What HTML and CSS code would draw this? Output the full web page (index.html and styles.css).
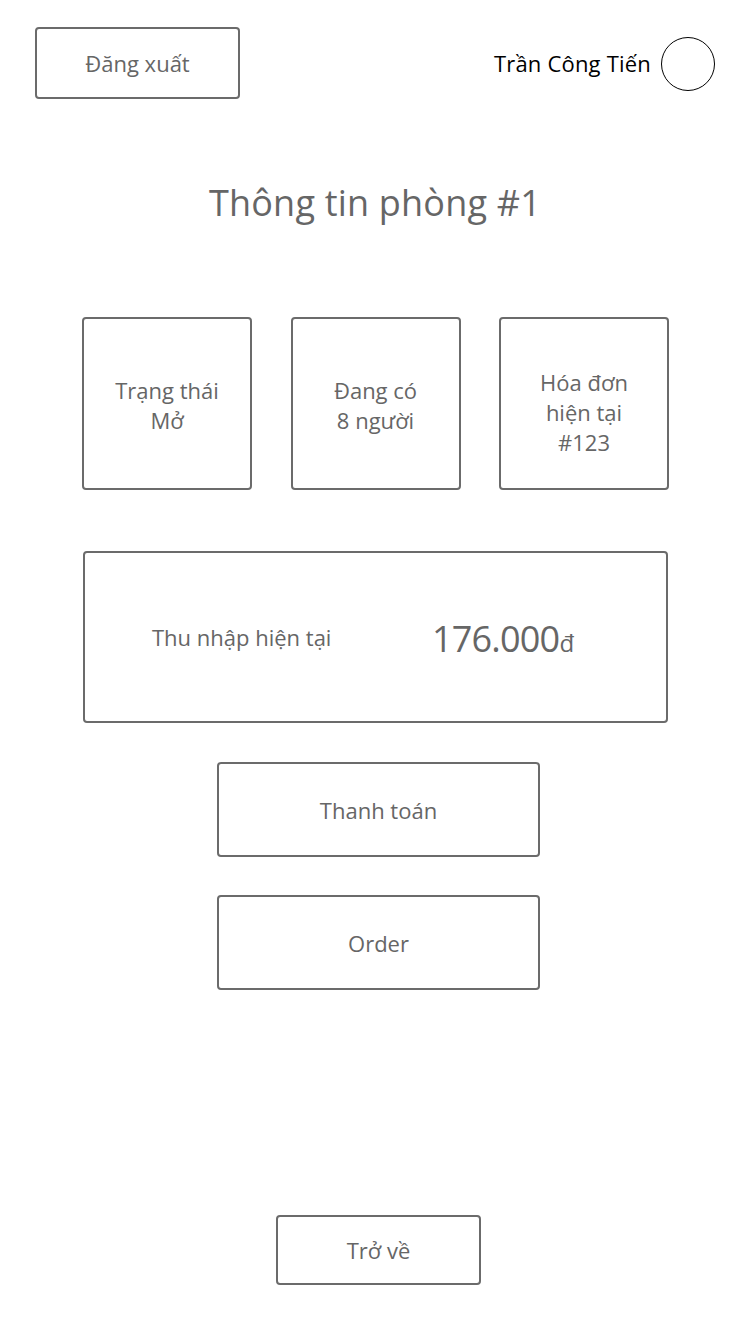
FILE: index.html
```html
<!DOCTYPE html>
<html lang="vi">
<head>
<meta charset="utf-8">
<link rel="stylesheet" href="styles.css">
</head>
<body>
<div class="page">
  <header class="header">
    <div class="btn btn-logout">Đăng xuất</div>
    <div class="user">
      <span class="user-name">Trần Công Tiến</span>
      <span class="avatar"></span>
    </div>
  </header>

  <h1 class="title">Thông tin phòng #1</h1>

  <div class="stats">
    <div class="stat">Trạng thái<br>Mở</div>
    <div class="stat">Đang có<br>8 người</div>
    <div class="stat stat-low">Hóa đơn<br>hiện tại<br>#123</div>
  </div>

  <div class="income">
    <span class="income-label">Thu nhập hiện tại</span>
    <span class="income-value">176.000<span class="currency">đ</span></span>
  </div>

  <div class="actions">
    <div class="btn btn-action">Thanh toán</div>
    <div class="btn btn-action">Order</div>
  </div>

  <div class="footer">
    <div class="btn btn-back">Trở về</div>
  </div>
</div>
</body>
</html>
```

FILE: styles.css
```css
* { box-sizing: border-box; }
html, body { margin: 0; padding: 0; background: #fff; }
body {
  font-family: "Open Sans", "Noto Sans", sans-serif;
  color: #666;
}
.page {
  width: 750px;
  height: 1334px;
  display: flex;
  flex-direction: column;
}
.header {
  display: flex;
  justify-content: space-between;
  align-items: center;
  padding: 27px 35px 0 35px;
}
.btn {
  border: 2px solid #6b6b6b;
  border-radius: 4px;
  display: flex;
  align-items: center;
  justify-content: center;
  font-size: 22px;
  color: #666;
}
.btn-logout {
  width: 205px;
  height: 72px;
}
.user {
  display: flex;
  align-items: center;
  gap: 10px;
}
.user-name {
  color: #000;
  font-size: 22px;
  letter-spacing: 0.2px;
}
.avatar {
  width: 54px;
  height: 54px;
  border: 1px solid #000;
  border-radius: 50%;
  margin-top: 2px;
}
.title {
  margin: 80px 0 0 0;
  font-weight: normal;
  font-size: 36px;
  line-height: 48px;
  text-align: center;
  color: #666;
  letter-spacing: 0.2px;
}
.stats {
  display: flex;
  justify-content: space-between;
  width: 587px;
  margin: 90px 0 0 82px;
}
.stat {
  width: 170px;
  height: 173px;
  border: 2px solid #6b6b6b;
  border-radius: 4px;
  display: flex;
  align-items: center;
  justify-content: center;
  text-align: center;
  font-size: 22px;
  line-height: 30px;
  padding-top: 2px;
}
.stat-low {
  padding-top: 16px;
}
.income {
  width: 585px;
  height: 172px;
  margin: 61px 0 0 83px;
  border: 2px solid #6b6b6b;
  border-radius: 4px;
  display: flex;
  align-items: center;
  padding-left: 67px;
}
.income-label {
  font-size: 22px;
  width: 280px;
  white-space: nowrap;
}
.income-value {
  font-size: 36px;
  letter-spacing: -0.8px;
  margin-top: 2px;
}
.currency {
  font-size: 24px;
  letter-spacing: 0;
}
.actions {
  display: flex;
  flex-direction: column;
  gap: 38px;
  margin: 39px 0 0 217px;
}
.btn-action {
  width: 323px;
  height: 95px;
}
.footer {
  margin: 225px 0 0 276px;
}
.btn-back {
  width: 205px;
  height: 70px;
}
```
